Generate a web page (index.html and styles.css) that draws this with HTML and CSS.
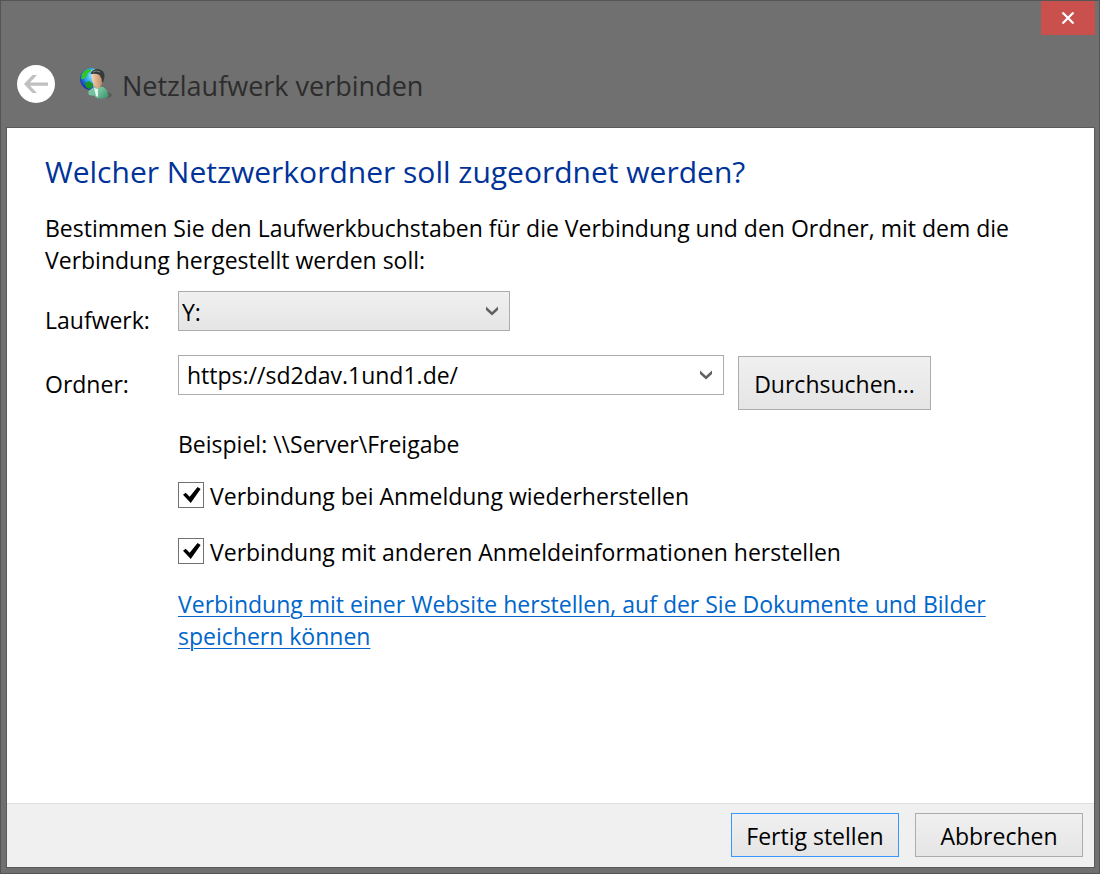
FILE: index.html
```html
<!DOCTYPE html>
<html lang="de">
<head>
<meta charset="utf-8">
<meta name="viewport" content="width=device-width, initial-scale=1">
<title>Netzlaufwerk verbinden</title>
<link rel="stylesheet" href="styles.css">
</head>
<body>
<div class="window">
  <header class="titlebar">
    <div class="caption">
      <button class="close" type="button" aria-label="Schließen">
        <svg width="14" height="12" viewBox="0 0 14 12"><path d="M1.5 .5 12.5 11.5M12.5 .5 1.5 11.5" stroke="#fff" stroke-width="2.2" fill="none"/></svg>
      </button>
    </div>
    <div class="nav">
      <button class="back" type="button" aria-label="Zurück">
        <svg width="38" height="38" viewBox="0 0 38 38"><circle cx="19" cy="19" r="19" fill="#fff"/><path d="M7 19 15.500 10H20L13 17.400H31V20.800H13L20 28H15.500Z" fill="#c0c0c0"/></svg>
      </button>
      <svg class="app-icon" width="34" height="34" viewBox="0 0 34 34" aria-hidden="true">
        <defs>
          <radialGradient id="globe" cx=".58" cy=".35" r=".65"><stop offset="0" stop-color="#8ff4ff"/><stop offset=".5" stop-color="#2fa6ee"/><stop offset="1" stop-color="#1a2fa8"/></radialGradient>
          <linearGradient id="face" x1="0" x2="1"><stop offset="0" stop-color="#f5d3b0"/><stop offset="1" stop-color="#b98760"/></linearGradient>
          <linearGradient id="shirt" x1="0" x2="1" y2=".6"><stop offset="0" stop-color="#7fcda6"/><stop offset=".6" stop-color="#6cc09a"/><stop offset="1" stop-color="#4a9a76"/></linearGradient>
        </defs>
        <ellipse cx="27" cy="28" rx="6" ry="3" fill="#4d5551" opacity=".7"/>
        <circle cx="12" cy="12" r="11" fill="url(#globe)"/>
        <path d="M3 7Q6 2 11 2L12 4 9 6 8 9 5 12 2 12Z" fill="#35c52a"/>
        <path d="M6 16 10 14 14 17 13 20 10 22 7 20Z" fill="#159a22"/>
        <path d="M12 4 15 2 17 4 14 7Z" fill="#a6f27c"/>
        <path d="M14 17H21V25H15Z" fill="#d8aa83"/>
        <path d="M12.500 9Q13 5 18 5 24 5 24 11 24 18 20 20 15 20 13 14Z" fill="url(#face)"/>
        <path d="M11.500 7Q13 2 19 2 26 3 25.500 10 25 14 23 16 23 11 20.500 8 17 6 11.500 7Z" fill="#353a3b"/>
        <path d="M14 5Q17 3 21 5" fill="none" stroke="#7b8182"/>
        <path d="M10 28Q8 24 12 22L16 19.500 19 22 22 19.500Q28 20 29.500 29 27 32 20 31.500 16 31 16 29Z" fill="url(#shirt)"/>
        <path d="M15 21 19 22 19 30 17 29Z" fill="#e9f7f1"/>
      </svg>
      <h1 class="title">Netzlaufwerk verbinden</h1>
    </div>
  </header>
  <form class="client">
    <main class="content">
      <h2 class="heading">Welcher Netzwerkordner soll zugeordnet werden?</h2>
      <p class="intro">Bestimmen Sie den Laufwerkbuchstaben für die Verbindung und den Ordner, mit dem die Verbindung hergestellt werden soll:</p>
      <div class="row">
        <label class="label" for="drive">Laufwerk:</label>
        <div class="combo combo-drive">
          <select id="drive" class="field drive"><option>Y:</option></select>
          <svg class="chevron" width="12" height="10" viewBox="0 0 12 10"><path d="M0 .5 6 6 12 .5V4L6 9.500 0 4Z" fill="#606060"/></svg>
        </div>
      </div>
      <div class="row row-folder">
        <label class="label" for="folder">Ordner:</label>
        <div class="combo combo-folder">
          <input id="folder" class="field folder" type="text" value="https://sd2dav.1und1.de/">
          <svg class="chevron" width="12" height="10" viewBox="0 0 12 10"><path d="M0 .5 6 6 12 .5V4L6 9.500 0 4Z" fill="#606060"/></svg>
        </div>
        <button class="button browse" type="button">Durchsuchen...</button>
      </div>
      <div class="options">
        <p class="example">Beispiel: \\Server\Freigabe</p>
        <label class="check"><input class="box" type="checkbox" checked><span>Verbindung bei Anmeldung wiederherstellen</span></label>
        <label class="check"><input class="box" type="checkbox" checked><span>Verbindung mit anderen Anmeldeinformationen herstellen</span></label>
        <a class="link" href="#">Verbindung mit einer Website herstellen, auf der Sie Dokumente und Bilder speichern können</a>
      </div>
    </main>
    <footer class="footer">
      <button class="button action primary" type="submit">Fertig stellen</button>
      <button class="button action" type="button">Abbrechen</button>
    </footer>
  </form>
</div>
</body>
</html>
```
FILE: styles.css
```css
* { box-sizing: border-box; }
body {
  margin: 0;
  background: #707070;
  color: #000;
  font: 23px/32px "Open Sans", "Noto Sans", sans-serif;
}
h1, h2, p { margin: 0; font-weight: 400; }
button, input, select { font: inherit; color: inherit; }
.window {
  display: flex;
  flex-direction: column;
  min-height: 100vh;
  padding: 0 4px 5px 5px;
  border: 1px solid #555;
  background: #707070;
}
.caption { display: flex; justify-content: flex-end; }
.close {
  display: flex;
  align-items: center;
  justify-content: center;
  width: 54px;
  height: 34px;
  padding: 0;
  border: 0;
  background: #c9504d;
}
.nav { display: flex; align-items: center; height: 40px; margin: 29px 0 23px 11px; }
.back { display: flex; width: 38px; height: 38px; padding: 0; border: 0; background: none; }
.app-icon { margin-left: 24px; }
.title { margin: 4px 0 0 9px; font-size: 27px; line-height: 36px; color: #2d2d2d; }
.client {
  display: flex;
  flex: 1;
  flex-direction: column;
  border: 1px solid #5a5a5a;
  background: #fff;
}
.content { flex: 1; padding: 24px 38px; }
.heading { font-size: 30px; line-height: 40px; color: #003399; }
.intro { margin-top: 20px; }
.row { display: flex; align-items: flex-start; margin-top: 15px; }
.row-folder { margin-top: 19px; }
.label { width: 133px; margin-top: 13px; }
.combo { position: relative; height: 40px; }
.combo-drive { width: 332px; }
.combo-folder { width: 546px; }
.field {
  display: block;
  width: 100%;
  height: 100%;
  border: 1px solid #acacac;
  border-radius: 0;
  outline: 0;
  appearance: none;
}
.drive { padding: 2px 30px 0 3px; background: linear-gradient(#f0f0f0, #e5e5e5); }
.folder { padding: 0 30px 0 8px; background: #fff; }
.chevron { position: absolute; top: 15px; right: 12px; pointer-events: none; }
.button {
  padding: 2px 0 0;
  border: 1px solid #acacac;
  background: linear-gradient(#f0f0f0, #e5e5e5);
}
.browse { width: 193px; height: 54px; margin: 1px 0 0 14px; }
.options { display: flex; flex-direction: column; align-items: flex-start; padding-left: 133px; }
.example { margin-top: 18px; }
.check { display: flex; align-items: center; gap: 6px; margin-top: 20px; }
.check + .check { margin-top: 24px; }
.box {
  flex: none;
  width: 26px;
  height: 26px;
  margin: 0 0 2px;
  border: 1px solid #707070;
  background: #fff;
  appearance: none;
}
.box:checked::before {
  content: "";
  display: block;
  width: 18px;
  height: 16px;
  margin: 4px 0 0 4px;
  background: #000;
  clip-path: polygon(0 49%, 15% 36%, 37% 61%, 81% 0, 98% 12%, 43% 100%);
}
.link { margin-top: 20px; color: #0066cc; text-decoration-thickness: 1px; text-underline-offset: 3px; }
.footer {
  display: flex;
  justify-content: flex-end;
  gap: 16px;
  padding: 9px 11px 10px;
  border-top: 1px solid #dfdfdf;
  background: #f0f0f0;
}
.action { width: 168px; height: 44px; }
.primary { border-color: #3399ff; }
```
